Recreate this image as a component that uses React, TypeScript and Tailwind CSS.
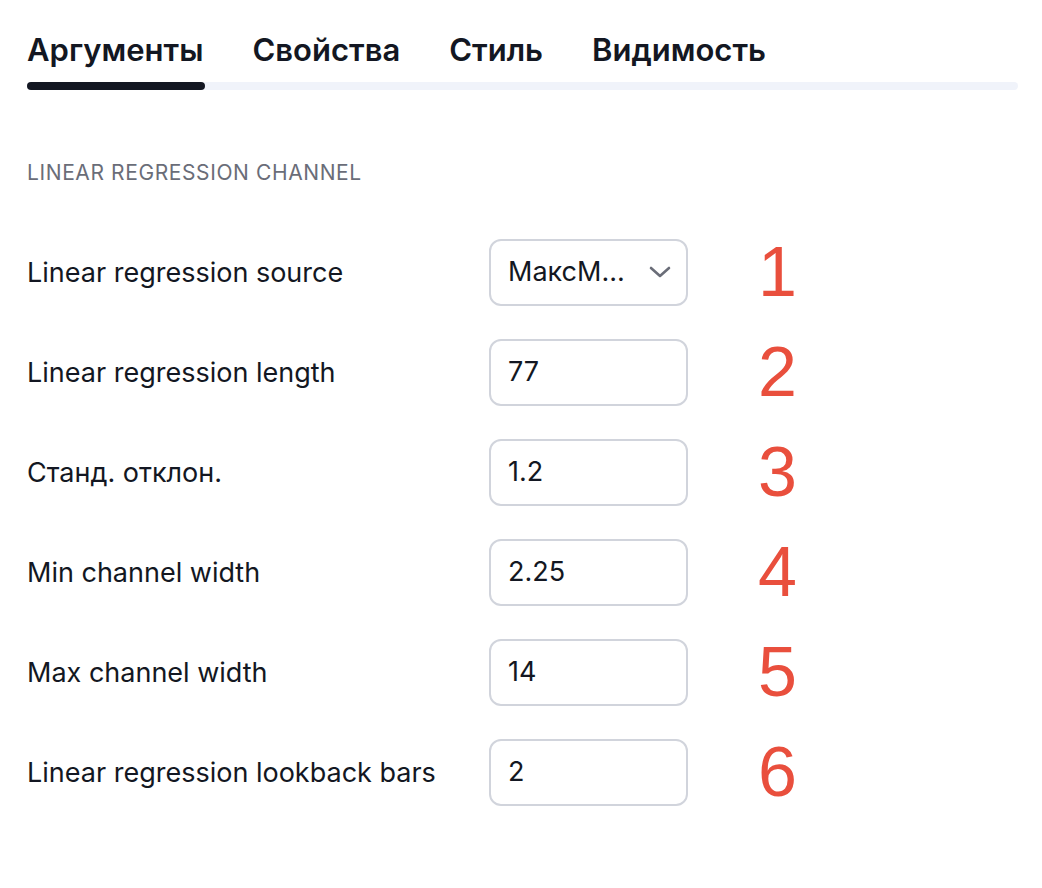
const tabs = ["Аргументы", "Свойства", "Стиль", "Видимость"];

const fields = [
  { label: "Linear regression source", value: "МаксМ...", select: true },
  { label: "Linear regression length", value: "77" },
  { label: "Станд. отклон.", value: "1.2" },
  { label: "Min channel width", value: "2.25" },
  { label: "Max channel width", value: "14" },
  { label: "Linear regression lookback bars", value: "2" },
];

function Chevron() {
  return (
    <svg width="22" height="12" viewBox="0 0 22 12" fill="none" className="text-[#6a6d78]">
      <polyline points="2,2 11,10 20,2" stroke="currentColor" strokeWidth="2.6" strokeLinecap="round" strokeLinejoin="round" />
    </svg>
  );
}

export default function App() {
  return (
    <div className="w-[1042px] h-[888px] bg-white px-[27px] pt-[30px] text-[#131722] font-['Inter',sans-serif]">
      {/* tab strip */}
      <div className="w-[991px]">
        <div className="flex gap-[49px]">
          {tabs.map((t) => (
            <div key={t} className="text-[31px] leading-[40px] font-semibold">
              {t}
            </div>
          ))}
        </div>
        <div className="mt-[12px] h-[8px] rounded-full bg-[#f0f3fa]">
          <div className="h-[8px] w-[178px] rounded-full bg-[#131722]" />
        </div>
      </div>

      <div className="mt-[69px] text-[21px] leading-[28px] text-[#6a6d78] tracking-[0.6px]">
        LINEAR REGRESSION CHANNEL
      </div>

      <div className="mt-[35px] flex flex-col">
        {fields.map((f, i) => (
          <div key={f.label} className="flex items-center h-[100px]">
            <div className="w-[462px] text-[27px] pt-[2px]">{f.label}</div>
            <div className="w-[199px] h-[67px] rounded-[12px] border-2 border-[#d1d4dc] flex items-center pl-[17px] pr-[15px] text-[27px]">
              <span className="flex-1">{f.value}</span>
              {f.select && <Chevron />}
            </div>
            <div className="ml-[70px] text-[70px] leading-none text-[#e94f3d] font-['Liberation_Sans',sans-serif]">
              {i + 1}
            </div>
          </div>
        ))}
      </div>
    </div>
  );
}
